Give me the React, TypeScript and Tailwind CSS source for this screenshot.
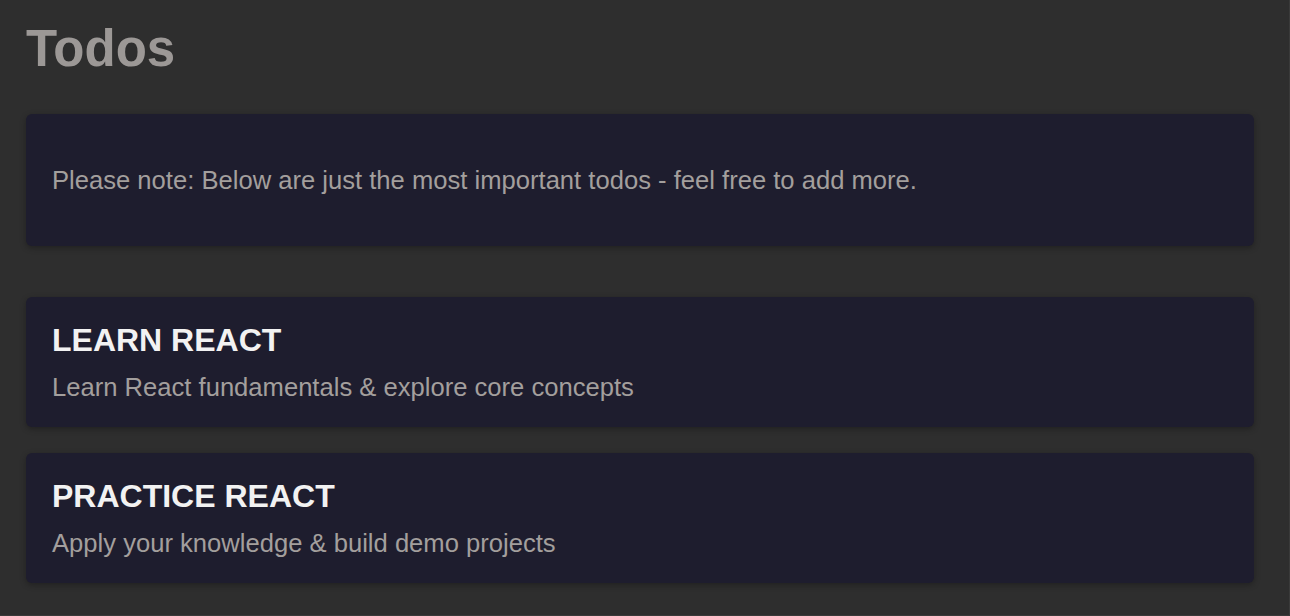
import React from "react";

const todos = [
  { title: "LEARN REACT", desc: "Learn React fundamentals & explore core concepts" },
  { title: "PRACTICE REACT", desc: "Apply your knowledge & build demo projects" },
];

export default function App() {
  return (
    <div
      className="w-[1290px] h-[616px] bg-[#2e2e2e] pl-[26px] pr-[35px] pt-[19px] overflow-hidden border-r border-b border-[#3a3a3a]"
      style={{ fontFamily: '"Liberation Sans", Arial, sans-serif' }}
    >
      <h1 className="text-[51px] leading-[60px] font-bold text-[#9c9896]">Todos</h1>
      <div className="mt-[35px] h-[132px] rounded-[6px] bg-[#1e1d2e] shadow-[0_2px_6px_rgba(0,0,0,0.3)] px-[26px] flex items-center">
        <p className="text-[25.6px] leading-[36px] text-[#a39f9d]">
          Please note: Below are just the most important todos - feel free to add more.
        </p>
      </div>
      <ul className="mt-[51px] flex flex-col gap-[26px]">
        {todos.map((t) => (
          <li
            key={t.title}
            className="h-[130px] rounded-[6px] bg-[#1e1d2e] shadow-[0_2px_6px_rgba(0,0,0,0.3)] px-[26px] pt-[24px]"
          >
            <h2 className="text-[32px] leading-[38px] font-bold text-[#f2f2f2]">{t.title}</h2>
            <p className="mt-[10px] text-[25.6px] leading-[36px] text-[#a39f9d]">{t.desc}</p>
          </li>
        ))}
      </ul>
    </div>
  );
}
